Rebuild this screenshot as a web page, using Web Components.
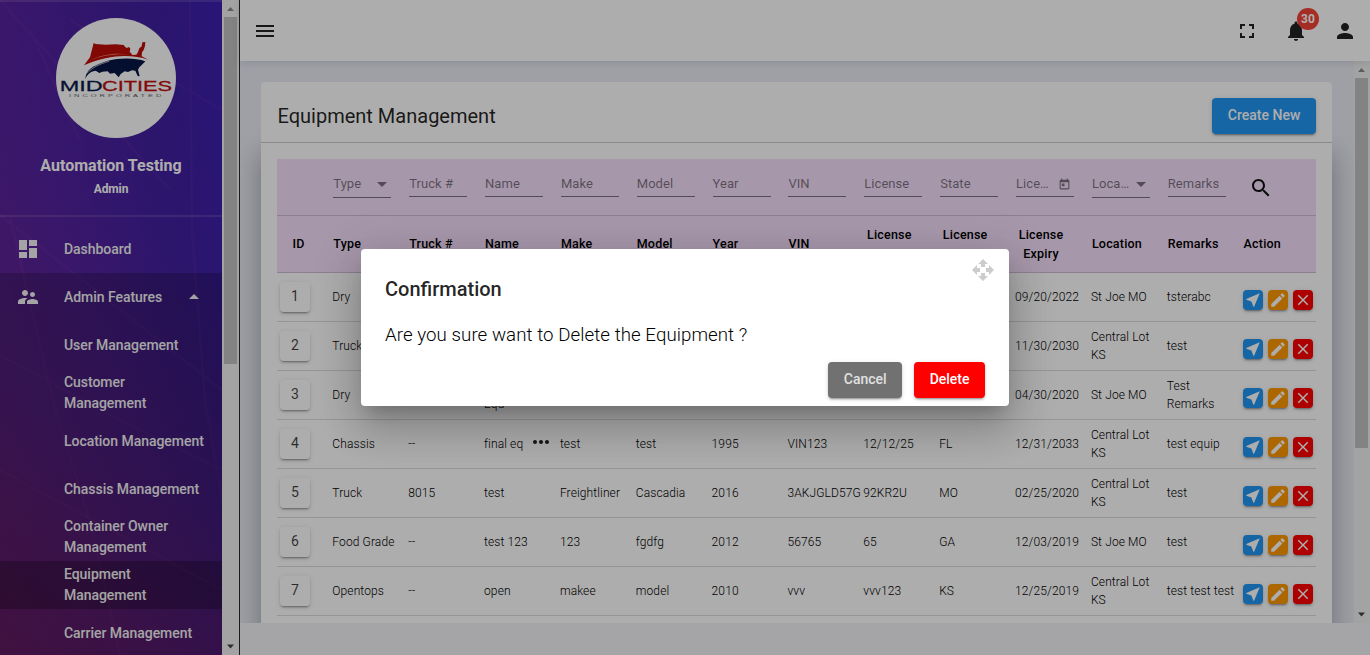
<!DOCTYPE html>
<html lang="en">
<head>
<meta charset="utf-8">
<title>Equipment Management</title>
<style>
  html, body { margin: 0; height: 100%; overflow: hidden; }
  body { font-family: Roboto, "Liberation Sans", sans-serif; color: rgba(0,0,0,.87); font-size: 14px; }
</style>
</head>
<body>
<app-shell></app-shell>
<script>
const define = (name, html, setup) => {
  const t = document.createElement('template');
  t.innerHTML = html;
  customElements.define(name, class extends HTMLElement {
    connectedCallback() {
      if (this.shadowRoot) return;
      const root = this.attachShadow({ mode: 'open' });
      root.appendChild(t.content.cloneNode(true));
      if (setup) setup(this, root);
    }
  });
};

const ICONS = {
  menu: 'M3 18h18v-2H3v2zm0-5h18v-2H3v2zm0-7v2h18V6H3z',
  fullscreen: 'M7 14H5v5h5v-2H7v-3zm-2-4h2V7h3V5H5v5zm12 7h-3v2h5v-5h-2v3zM14 5v2h3v3h2V5h-5z',
  bell: 'M12 22c1.1 0 2-.9 2-2h-4c0 1.1.89 2 2 2zm6-6v-5c0-3.07-1.64-5.64-4.5-6.32V4c0-.83-.67-1.5-1.5-1.5s-1.5.67-1.5 1.5v.68C7.63 5.36 6 7.92 6 11v5l-2 2v1h16v-1l-2-2z',
  person: 'M12 12c2.21 0 4-1.79 4-4s-1.79-4-4-4-4 1.79-4 4 1.79 4 4 4zm0 2c-2.67 0-8 1.34-8 4v2h16v-2c0-2.66-5.33-4-8-4z',
  dashboard: 'M3 13h8V3H3v10zm0 8h8v-6H3v6zm10 0h8V11h-8v10zm0-18v6h8V3h-8z',
  people: 'M16.5 12c1.38 0 2.49-1.12 2.49-2.5S17.88 7 16.5 7C15.12 7 14 8.12 14 9.5s1.12 2.5 2.5 2.5zM9 11c1.66 0 2.99-1.34 2.99-3S10.66 5 9 5C7.34 5 6 6.34 6 8s1.34 3 3 3zm7.5 3c-1.83 0-5.5.92-5.5 2.75V19h11v-2.25c0-1.83-3.67-2.75-5.5-2.75zM9 13c-2.33 0-7 1.17-7 3.5V19h7v-2.25c0-.85.33-2.34 2.37-3.47C10.5 13.1 9.66 13 9 13z',
  up: 'M7 14l5-5 5 5z',
  down: 'M7 10l5 5 5-5z',
  today: 'M19 3h-1V1h-2v2H8V1H6v2H5c-1.11 0-1.99.9-1.99 2L3 19c0 1.1.89 2 2 2h14c1.1 0 2-.9 2-2V5c0-1.1-.9-2-2-2zm0 16H5V8h14v11zM7 10h5v5H7z',
  search: 'M15.5 14h-.79l-.28-.27C15.41 12.59 16 11.11 16 9.5 16 5.91 13.09 3 9.5 3S3 5.91 3 9.5 5.91 16 9.5 16c1.61 0 3.09-.59 4.23-1.57l.27.28v.79l5 4.99L20.49 19l-4.99-5zm-6 0C7.01 14 5 11.99 5 9.5S7.01 5 9.5 5 14 7.01 14 9.5 11.99 14 9.5 14z',
  near: 'M21 3L3 10.53v.98l6.84 2.65L12.48 21h.98L21 3z',
  edit: 'M3 17.25V21h3.75L17.81 9.94l-3.75-3.75L3 17.25zM20.71 7.04c.39-.39.39-1.02 0-1.41l-2.34-2.34c-.39-.39-1.02-.39-1.41 0l-1.83 1.83 3.75 3.75 1.83-1.83z',
  close: 'M19 6.41L17.59 5 12 10.59 6.41 5 5 6.41 10.59 12 5 17.59 6.41 19 12 13.41 17.59 19 19 17.59 13.41 12z',
  dots: 'M6 10c-1.1 0-2 .9-2 2s.9 2 2 2 2-.9 2-2-.9-2-2-2zm12 0c-1.1 0-2 .9-2 2s.9 2 2 2 2-.9 2-2-.9-2-2-2zm-6 0c-1.1 0-2 .9-2 2s.9 2 2 2 2-.9 2-2-.9-2-2-2z',
  move: 'M10 9h4V6h3l-5-5-5 5h3v3zm-1 1H6V7l-5 5 5 5v-3h3v-4zm14 2l-5-5v3h-3v4h3v3l5-5zm-9 3h-4v3H7l5 5 5-5h-3v-3z'
};

define('ui-icon', `<style>:host{display:block;width:24px;height:24px;flex:none}svg{display:block;width:100%;height:100%;fill:currentColor}</style><svg viewBox="0 0 24 24"><path/></svg>`,
  (el, r) => {
    r.querySelector('path').setAttribute('d', ICONS[el.getAttribute('name')]);
    const s = el.getAttribute('size');
    if (s) { el.style.width = el.style.height = s + 'px'; }
  });

define('ui-button', `<style>
  :host{display:block;box-sizing:border-box;height:36px;padding:0 15.5px;line-height:35px;border-radius:4px;font-size:14px;font-weight:500;
    color:#fff;background:var(--bg,#2196f3);text-align:center;white-space:nowrap;
    box-shadow:0 3px 1px -2px rgba(0,0,0,.2),0 2px 2px rgba(0,0,0,.14),0 1px 5px rgba(0,0,0,.12)}
</style><slot></slot>`);

define('scroll-bar', `<style>
  :host{display:flex;flex-direction:column;box-sizing:border-box;width:17px;padding:0 2px;background:#f1f1f1;flex:none}
  svg{display:block;width:13px;height:17px;flex:none}
  .thumb{background:#c1c1c1;height:var(--thumb)} .rest{flex:1}
</style><svg viewBox="0 0 13 17"><path fill="#8a8a8a" d="M3 11l3.5-4 3.5 4z"/></svg><div class="thumb"></div><div class="rest"></div><svg viewBox="0 0 13 17"><path fill="#444" d="M3 6.5h7l-3.5 4z"/></svg>`);

define('brand-logo', `<style>:host{display:block;width:120px;height:120px}svg{display:block}</style>
<svg width="120" height="120" viewBox="18 18 360 360">
  <circle cx="198" cy="198" r="180" fill="#fff"/>
  <path fill="#c00d08" d="M131 93l6 3 30 2 30-1 24 2 4 5 5 4 7-3 4 5-2 10 5 4 2 5 13-1 5-8 4-11 7-6 2-12 9-1-1 12-4 12-5 7-1 12 20 10C245 127 180 126 102 160l18-24z"/>
  <path fill="#e2876c" d="M116 146c36-18 80-25 120-19-45-2-82 4-120 19z"/>
  <path fill="#fff" d="M98 166C160 132 230 124 294 147 230 136 150 142 98 166z"/>
  <path fill="#071644" d="M106 198c5-24 16-35 68-52 36-9 82-9 112 2l-8 8-10 10-4 7 5 20-6-1-7-16-10-1-12 5-10-2-12 8-6 10-12-13-14 2-7-7-16 1-9 4-11-7-12 3c-8 4-14 10-19 21z"/>
  <path fill="none" stroke="#fff" stroke-width="2" d="M111 184c14-16 36-28 66-36"/>
  <g font-family="Liberation Sans, Arial, sans-serif">
    <text x="29" y="238" font-size="43" fill="#0a1a4a" stroke="#0a1a4a" stroke-width=".8" textLength="129" lengthAdjust="spacingAndGlyphs">MID</text>
    <text x="156" y="238" font-size="43" fill="#c00d12" stroke="#c00d12" stroke-width=".8" textLength="210" lengthAdjust="spacingAndGlyphs">CITIES</text>
    <text x="57" y="255" font-size="12.5" fill="#666" textLength="286" lengthAdjust="spacingAndGlyphs" letter-spacing="5">INCORPORATED</text>
  </g>
</svg>`);

define('nav-item', `<style>
  :host{display:flex;align-items:center;box-sizing:border-box;height:48px;flex:none;padding:0 16px 0 0;font-weight:500;line-height:21px;color:#f2f2f2}
  :host([active]){background:rgba(0,0,0,.25)}
  .lead{width:64px;box-sizing:border-box;padding-left:16px;flex:none}
  .label{flex:1;white-space:nowrap;letter-spacing:-.04px}
</style><span class="lead"></span><span class="label"><slot></slot></span><slot name="tail"></slot>`,
  (el, r) => {
    const n = el.getAttribute('icon');
    if (n) r.querySelector('.lead').innerHTML = `<ui-icon name="${n}"></ui-icon>`;
  });

define('side-nav', `<style>
  :host{display:flex;width:239px;flex:none;height:655px;border-right:1px solid #2b2530;color:#fff}
  .panel{position:relative;width:222px;height:655px;overflow:hidden;display:flex;flex-direction:column;
    background:linear-gradient(35deg,rgba(125,32,110,.8) 0%,rgba(115,35,130,.3) 35%,transparent 65%),linear-gradient(82deg,#62249a 0%,#51229f 40%,#41209f 75%,#3b1fb0 100%)}
  .rays{position:absolute;left:0;top:0}
  .user{box-sizing:border-box;height:217px;border-top:2px solid rgba(255,255,255,.12);border-bottom:2px solid rgba(255,255,255,.12);
    display:flex;flex-direction:column;align-items:center;padding-top:16px;flex:none;position:relative}
  brand-logo{margin-left:10px}
  .name{font-size:16px;font-weight:700;line-height:20px;margin-top:18px}
  .role{font-size:12px;font-weight:700;line-height:16px;margin-top:5px;letter-spacing:-.1px}
  nav{display:flex;flex-direction:column;position:relative;padding-top:8px}
  .group{background:rgba(0,0,0,.2)}
  scroll-bar{--thumb:347px}
</style>
<div class="panel">
  <svg class="rays" width="222" height="655" fill="none" stroke="#ff7ac0" stroke-opacity=".05" stroke-width="2.5">
    <path d="M0 0L170 190M0 215L222 390M0 355L120 420 222 470M10 217L55 410 90 520 120 655M190 0L192 230 205 400 222 500M0 470L222 590M70 20L222 110M30 30L80 140"/>
  </svg>
  <div class="user"><brand-logo></brand-logo><div class="name">Automation Testing</div><div class="role">Admin</div></div>
  <nav>
    <nav-item icon="dashboard">Dashboard</nav-item>
    <div class="group">
      <nav-item icon="people">Admin Features<ui-icon slot="tail" name="up"></ui-icon></nav-item>
      <nav-item>User Management</nav-item>
      <nav-item>Customer<br>Management</nav-item>
      <nav-item>Location Management</nav-item>
      <nav-item>Chassis Management</nav-item>
      <nav-item>Container Owner<br>Management</nav-item>
      <nav-item active>Equipment<br>Management</nav-item>
      <nav-item>Carrier Management</nav-item>
    </div>
  </nav>
</div>
<scroll-bar></scroll-bar>`);

define('top-bar', `<style>
  :host{display:flex;align-items:center;gap:25px;box-sizing:border-box;height:61px;flex:none;padding:0 13px;background:#fff;position:relative;
    box-shadow:0 1px 8px rgba(50,50,80,.16);color:#222}
  .gap{flex:1}
  .bell{position:relative}
  .badge{position:absolute;left:13px;top:-11px;width:22px;height:22px;border-radius:50%;background:#f44336;color:#fff;
    font-size:12px;font-weight:700;line-height:22px;text-align:center}
</style>
<ui-icon name="menu"></ui-icon><span class="gap"></span>
<ui-icon name="fullscreen"></ui-icon>
<div class="bell"><ui-icon name="bell"></ui-icon><span class="badge">30</span></div>
<ui-icon name="person"></ui-icon>`);

define('filter-field', `<style>
  :host{display:flex;align-items:center;box-sizing:border-box;width:58px;height:27px;margin-top:11px;border-bottom:1px solid rgba(0,0,0,.5);
   font-size:13px;letter-spacing:.05px;line-height:27px;color:rgba(0,0,0,.5);font-weight:400}
  :host([kind=down]){height:28px}
  span{flex:1;white-space:nowrap}
</style><span><slot></slot></span>`,
  (el, r) => {
    const k = el.getAttribute('kind');
    if (k === 'down') r.innerHTML += '<ui-icon name="down" size="24" style="margin:0 -3px 0 -4px"></ui-icon>';
    if (k === 'today') r.innerHTML += '<ui-icon name="today" size="13" style="margin:2px 3px 0 0"></ui-icon>';
  });

define('row-actions', `<style>
  :host{display:flex;gap:5px;padding-top:5px}
  span{display:flex;align-items:center;justify-content:center;width:20px;height:20px;border-radius:4px;color:#fff;
   box-shadow:0 3px 1px -2px rgba(0,0,0,.2),0 2px 2px rgba(0,0,0,.14),0 1px 5px rgba(0,0,0,.12)}
</style>
<span style="background:#2196f3"><ui-icon name="near" size="18"></ui-icon></span>
<span style="background:#ff9800"><ui-icon name="edit" size="18"></ui-icon></span>
<span style="background:#f00"><ui-icon name="close" size="18"></ui-icon></span>`);

define('equipment-table', `<style>
  :host{display:block}
  .row{display:grid;grid-template-columns:55.3px repeat(12,75.87px) 1fr;box-sizing:border-box;height:49px;border-bottom:1px solid #dcdcdc;align-items:center;
    font-size:12px;font-weight:300;line-height:18px;color:#000;letter-spacing:.12px}
  .row>*{white-space:nowrap}
  .filters,.heads{height:57px;background:#f6dffc;border-color:#cfbcd8}
  .filters{align-items:start;padding-left:1px}
  .heads{padding-left:1px;font-size:12.5px;font-weight:500;line-height:19px;color:#000;letter-spacing:.2px}
  .heads>span:not(.two){padding-bottom:2px}
  .filters ui-icon{margin:17px 0 0 5px;color:#111}
  .two{text-align:center;width:50px}
  .num{margin-left:3px;width:30px;height:30px;border-radius:4px;text-align:center;line-height:29px;font-size:14px;letter-spacing:0;font-weight:400;color:rgba(0,0,0,.75);
   box-shadow:0 3px 1px -2px rgba(0,0,0,.2),0 2px 2px rgba(0,0,0,.14),0 1px 5px rgba(0,0,0,.12)}
  .more{display:flex;align-items:center}
  .more ui-icon{margin:-4px 0 0 6px;color:#222}
</style>
<div class="row filters"><span></span>
  <filter-field kind="down">Type</filter-field><filter-field>Truck #</filter-field><filter-field>Name</filter-field><filter-field>Make</filter-field>
  <filter-field>Model</filter-field><filter-field>Year</filter-field><filter-field>VIN</filter-field><filter-field>License</filter-field><filter-field>State</filter-field>
  <filter-field kind="today">Lice…</filter-field><filter-field kind="down">Loca…</filter-field><filter-field>Remarks</filter-field>
  <ui-icon name="search"></ui-icon></div>
<div class="row heads"><span style="padding-left:14.5px">ID</span><span>Type</span><span>Truck #</span><span>Name</span><span>Make</span><span>Model</span><span>Year</span><span>VIN</span>
  <span class="two">License<br>&nbsp;</span><span class="two">License<br>&nbsp;</span><span class="two">License<br>Expiry</span><span>Location</span><span>Remarks</span><span>Action</span></div>`,
  (el, r) => {
    const KS = 'Central Lot<br>KS', SJ = 'St Joe MO';
    const rows = [
      ['Dry','','','','','','','','','09/20/2022',SJ,'tsterabc'],
      ['Truck','','','','','','','','','11/30/2030',KS,'test'],
      ['Dry','','&nbsp;<br>Equ','','','','','','','04/30/2020',SJ,'Test<br>Remarks'],
      ['Chassis','--','<span class="more">final eq <ui-icon name="dots"></ui-icon></span>','test','test','1995','VIN123','12/12/25','FL','12/31/2033',KS,'test equip'],
      ['Truck','8015','test','Freightliner','Cascadia','2016','3AKJGLD57G','92KR2U','MO','02/25/2020',KS,'test'],
      ['Food Grade','--','test 123','123','fgdfg','2012','56765','65','GA','12/03/2019',SJ,'test'],
      ['Opentops','--','open','makee','model','2010','vvv','vvv123','KS','12/25/2019',KS,'test test test']
    ];
    rows.forEach((cells, i) => {
      const d = document.createElement('div');
      d.className = 'row';
      d.innerHTML = `<div class="num">${i + 1}</div>` + cells.map(c => `<div>${c}</div>`).join('') + '<row-actions></row-actions>';
      r.appendChild(d);
    });
  });

define('equipment-card', `<style>
  :host{display:block;width:1071px;margin:21px 0 0 21px}
  header{display:flex;align-items:center;justify-content:space-between;box-sizing:border-box;height:61px;padding:8px 16px 0;background:#fff;
   border-radius:4px 4px 0 0;border-bottom:1px solid #cacaca;position:relative}
  h1{margin:0;font-size:20px;font-weight:400;letter-spacing:0;line-height:24px;padding-left:.5px}
  ui-button{padding:0 15.7px}
  section{background:#fff;padding:16px 16px 40px;box-shadow:0 10px 26px rgba(0,0,20,.32)}
</style>
<header><h1>Equipment Management</h1><ui-button>Create New</ui-button></header>
<section><equipment-table></equipment-table></section>`);

define('confirm-dialog', `<style>
  :host{display:flex;flex-direction:column;position:relative;box-sizing:border-box;width:648px;height:157px;background:#fff;border-radius:4px;padding:28px 24px 0;
   box-shadow:0 11px 15px -7px rgba(0,0,0,.2),0 24px 38px 3px rgba(0,0,0,.14),0 9px 46px 8px rgba(0,0,0,.12)}
  h2{margin:0;font-size:20px;font-weight:500;line-height:24px}
  p{margin:22px 0 0;font-size:18.7px;line-height:24px;font-weight:300;letter-spacing:.06px;color:#000}
  .buttons{display:flex;justify-content:flex-end;gap:12px;margin-top:15px}
  .grip{position:absolute;right:14px;top:9px;color:#ccc}
</style>
<h2>Confirmation</h2><p>Are you sure want to Delete the Equipment ?</p>
<div class="buttons"><ui-button style="--bg:#717171;color:#e0e0e0">Cancel</ui-button><ui-button style="--bg:#f00">Delete</ui-button></div>
<ui-icon class="grip" name="move"></ui-icon>`);

define('app-shell', `<style>
  :host{display:flex;position:relative;width:1370px;height:655px;overflow:hidden;background:#f3f4f7}
  main{flex:1;display:flex;flex-direction:column;min-width:0}
  .view{display:flex;height:562px;overflow:hidden;background:#e9ecf4}
  .scroll{width:1114px;height:562px;overflow:hidden;flex:none}
  .view scroll-bar{width:16px;padding:0 2px 0 1px;--thumb:370px}
  .backdrop{position:absolute;inset:0;background:rgba(0,0,0,.32);display:flex;align-items:center;justify-content:center}
</style>
<side-nav></side-nav>
<main><top-bar></top-bar>
  <div class="view"><div class="scroll"><equipment-card></equipment-card></div><scroll-bar></scroll-bar></div>
</main>
<div class="backdrop"><confirm-dialog></confirm-dialog></div>`);
</script>
</body>
</html>
